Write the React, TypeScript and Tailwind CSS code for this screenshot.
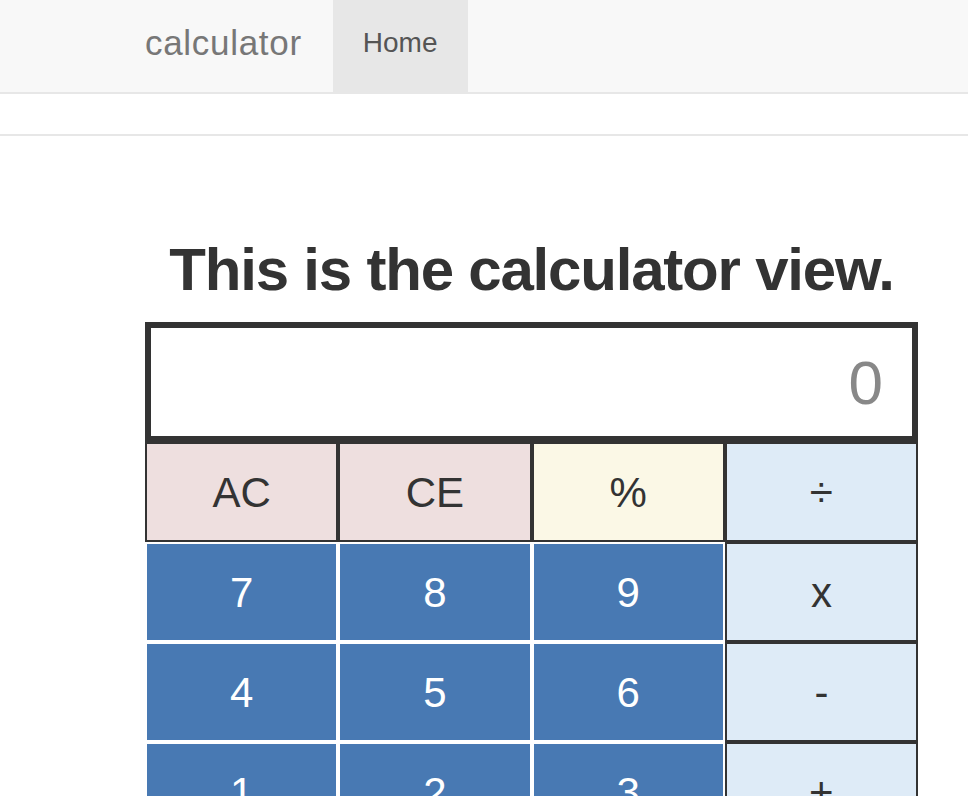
const keys: { label: string; kind: "clear" | "pct" | "op" | "num" }[] = [
  { label: "AC", kind: "clear" },
  { label: "CE", kind: "clear" },
  { label: "%", kind: "pct" },
  { label: "÷", kind: "op" },
  { label: "7", kind: "num" },
  { label: "8", kind: "num" },
  { label: "9", kind: "num" },
  { label: "x", kind: "op" },
  { label: "4", kind: "num" },
  { label: "5", kind: "num" },
  { label: "6", kind: "num" },
  { label: "-", kind: "op" },
  { label: "1", kind: "num" },
  { label: "2", kind: "num" },
  { label: "3", kind: "num" },
  { label: "+", kind: "op" },
];

const kindClass = {
  clear: "bg-[#eedfdf] border-[#333] text-[#333]",
  pct: "bg-[#fbf8e6] border-[#333] text-[#333]",
  op: "bg-[#deebf7] border-[#333] text-[#333]",
  num: "bg-[#4879b3] border-white text-white",
};

export default function App() {
  return (
    <div className="min-h-screen bg-white font-['Liberation_Sans',Arial,sans-serif] text-[#333]">
      <nav className="h-[94px] border-b-2 border-[#e7e7e7] bg-[#f8f8f8]">
        <div className="flex h-full pl-[145px]">
          <span className="self-center pb-[6px] text-[35px] tracking-[0.7px] text-[#777]">calculator</span>
          <a href="#" className="ml-[31px] flex items-center bg-[#e7e7e7] px-[30px] pb-[6px] text-[28px] text-[#555]">
            Home
          </a>
        </div>
      </nav>
      <div className="h-[42px] border-b-2 border-[#e7e7e7]" />

      <main className="pl-[145px]">
        <div className="w-[773px]">
          <h1 className="mt-[104px] mb-[22px] text-center text-[60px] leading-[60px] font-bold tracking-[-1.2px]">
            This is the calculator view.
          </h1>
          <div className="flex h-[120px] items-center justify-end border-[6px] border-[#333] bg-white pr-[29px] text-[62px] text-[#888]">
            0
          </div>
          <div className="grid grid-cols-4">
            {keys.map((k) => (
              <button
                key={k.label}
                className={`flex h-[100px] items-center justify-center border-2 text-[42px] ${kindClass[k.kind]}`}
              >
                {k.label}
              </button>
            ))}
          </div>
        </div>
      </main>
    </div>
  );
}
